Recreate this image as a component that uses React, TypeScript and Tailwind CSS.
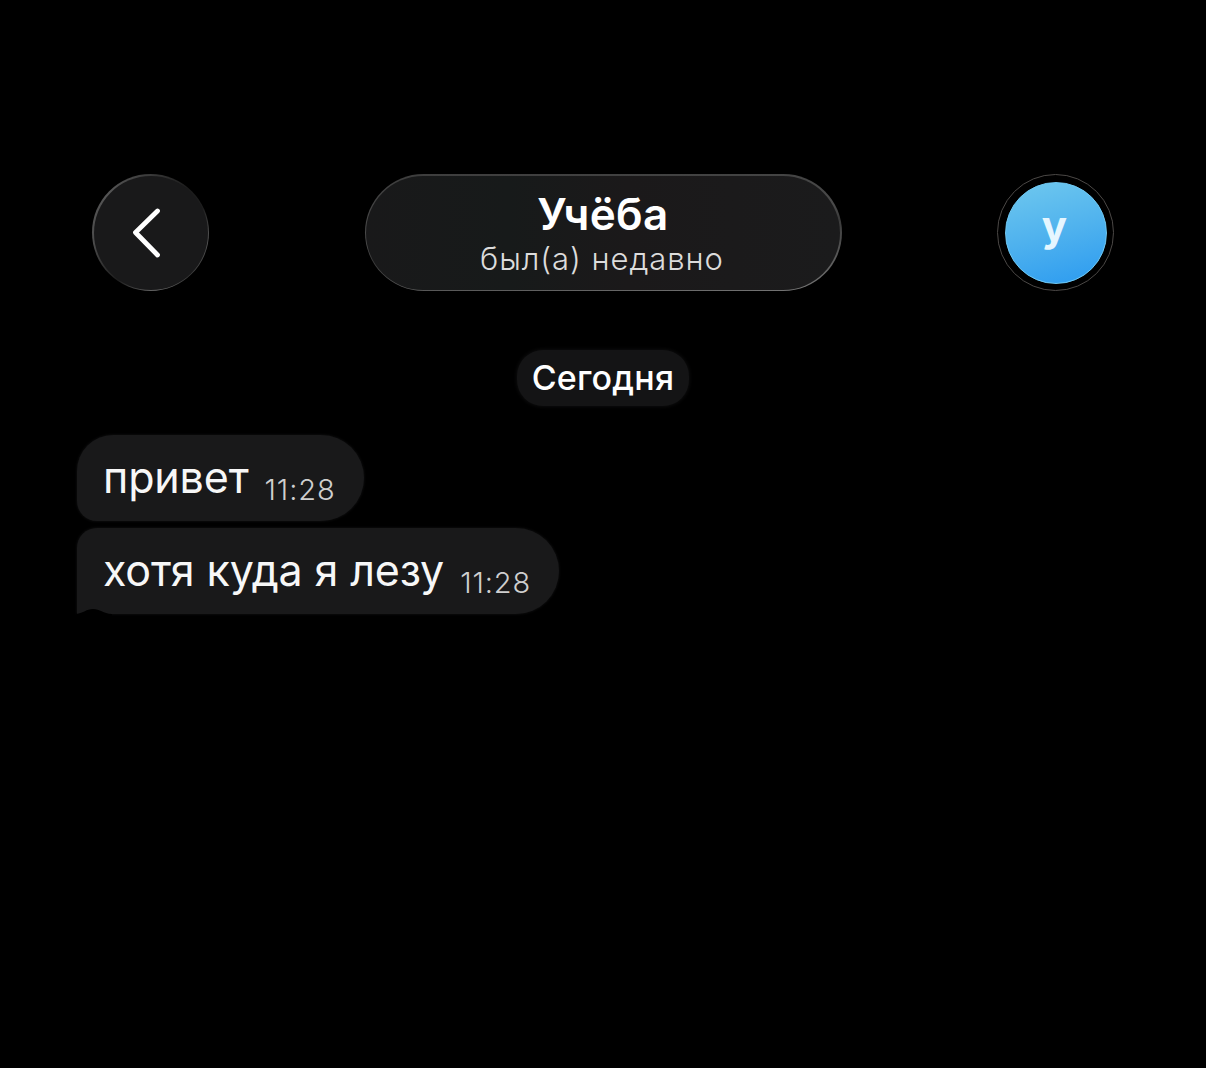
import { clsx } from 'clsx';

type Message = {
  id: number;
  text: string;
  time: string;
  last?: boolean;
};

const messages: Message[] = [
  { id: 1, text: 'привет', time: '11:28' },
  { id: 2, text: 'хотя куда я лезу', time: '11:28', last: true },
];

function BackButton() {
  return (
    <button
      aria-label="Назад"
      className="h-[117px] w-[117px] rounded-full bg-[conic-gradient(from_0deg,#3a3a3a,#1c1c1c_40deg,#1e1e1e_65deg,#555_95deg,#3c3c3c_140deg,#6a6a6a_175deg,#1e1e1e_215deg,#4c4c4c_260deg,#555_315deg,#3a3a3a)] p-[1.5px]"
    >
      <span className="flex h-full w-full items-center justify-center rounded-full bg-[#19191a]">
        <svg width="34" height="56" viewBox="0 0 34 56" fill="none" className="mr-[9px]">
          <path d="M28.5 6 L6.5 27.5 L28.5 50" stroke="#fff" strokeWidth="4.8" strokeLinecap="round" strokeLinejoin="round" />
        </svg>
      </span>
    </button>
  );
}

function ChatTitle() {
  return (
    <div className="h-[117px] w-[477px] rounded-full bg-[linear-gradient(175deg,#3d3d3d,#4a4a4a_45%,#3a3a3a_55%,#777)] p-[1.5px]">
      <div className="flex h-full w-full flex-col items-center rounded-full bg-[linear-gradient(90deg,#19191a,#171a1a_30%,#1b191a_55%,#1b1b1c)] pt-[11px]">
        <h1 className="text-[44px] leading-[54px] font-semibold tracking-[0.4px] text-white">Учёба</h1>
        <p className="mr-[2px] text-[31px] leading-[36px] font-light tracking-[0.95px] text-[#dcdcdc]">был(а) недавно</p>
      </div>
    </div>
  );
}

function Avatar() {
  return (
    <div className="flex h-[117px] w-[117px] items-center justify-center rounded-full border-[1.5px] border-[#4b4846]">
      <div className="flex h-[102px] w-[102px] items-center justify-center rounded-full border border-[#6fc8f3] bg-[linear-gradient(165deg,#6cc6ee_5%,#4fb2ee_50%,#2f9df0_95%)]">
        <span className="mr-[2px] pb-[13px] text-[42px] leading-none font-bold text-[#e6f6ff]">у</span>
      </div>
    </div>
  );
}

function Bubble({ message }: { message: Message }) {
  return (
    <div
      className={clsx(
        'relative flex h-[86px] items-start bg-[#19191a] pr-[28px] pl-[26px] shadow-[0_0_3px_#151516]',
        message.last ? 'rounded-[43px] rounded-tl-[20px] rounded-bl-none' : 'rounded-[43px] rounded-tl-[36px] rounded-bl-[20px]'
      )}
    >
      {/* notch that leaves the tail in the corner */}
      {message.last && (
        <svg width="38" height="12" viewBox="0 0 38 12" className="absolute -bottom-[4px] -left-[1px]">
          <path d="M0 8 C8 7 10 3 17 3 C24 3 27 7.5 36 8 V12 H0 Z" fill="#000" />
        </svg>
      )}
      <span className="text-[43px] leading-[85px] tracking-[-0.15px] text-[#f7f7f7]">{message.text}</span>
      <span className="ml-[16px] pt-[12px] text-[29px] leading-[86px] font-light tracking-[0.9px] text-[#cfcfcf]">{message.time}</span>
    </div>
  );
}

export default function App() {
  return (
    <div className="h-[1068px] w-[1206px] overflow-hidden bg-black pt-[174px] font-['Inter','Liberation_Sans',sans-serif]">
      <header className="flex items-center justify-between px-[92px]">
        <BackButton />
        <ChatTitle />
        <Avatar />
      </header>

      <main className="mt-[59px] flex flex-col">
        <div className="flex h-[56px] w-[172px] items-center justify-center self-center rounded-[26px] bg-[#141415] pb-[2px] text-[34px] font-medium tracking-[0.2px] text-white shadow-[0_0_4px_#131314]">
          Сегодня
        </div>
        <div className="mt-[29px] flex flex-col items-start gap-[7px] pl-[77px]">
          {messages.map(message => (
            <Bubble key={message.id} message={message} />
          ))}
        </div>
      </main>
    </div>
  );
}
